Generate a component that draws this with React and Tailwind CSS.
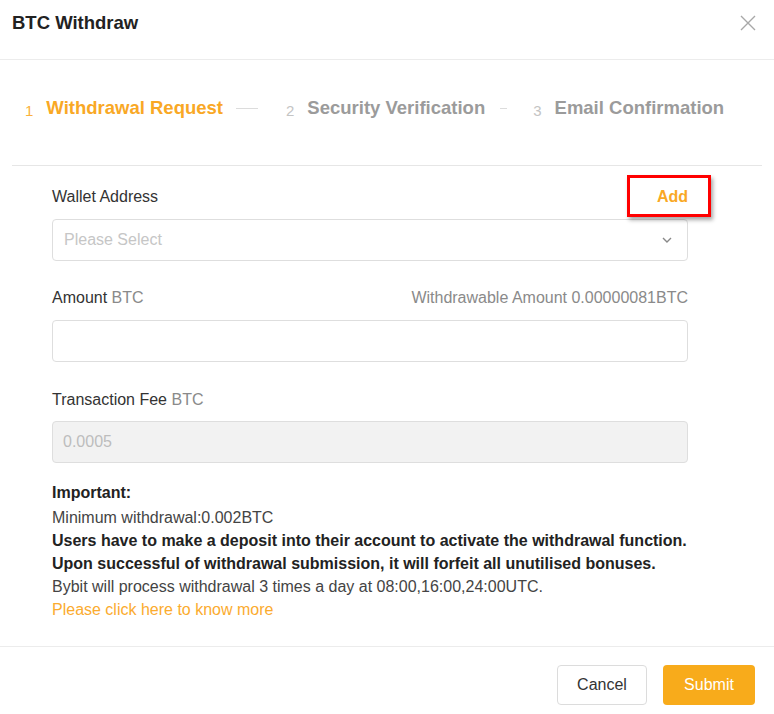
import React from 'react';

const font = { fontFamily: '"Liberation Sans", Arial, sans-serif' };

function Step({ num, label, active }) {
  return (
    <div className="flex items-baseline">
      <span className={`text-[15px] leading-none translate-y-[2px] ${active ? 'text-[#fbb13c]' : 'text-[#c4c4c4]'}`}>{num}</span>
      <span className={`ml-[13px] text-[18.5px] font-bold leading-6 ${active ? 'text-[#f9a825]' : 'text-[#9b9b9b]'}`}>{label}</span>
    </div>
  );
}

export default function App() {
  return (
    <div className="w-[774px] h-[714px] bg-white text-[#333] overflow-hidden" style={font}>
      {/* header */}
      <div className="h-[59px] flex items-center justify-between pl-3 pr-[18px] pb-[15px] pt-[15px]">
        <h2 className="text-[18.5px] font-bold text-[#222] leading-6 -translate-y-[7px]">BTC Withdraw</h2>
        <button type="button" aria-label="close" className="-translate-y-[7px]">
          <svg width="16" height="16" viewBox="0 0 16 16" className="text-[#a8a8a8]">
            <path d="M1 1L15 15M15 1L1 15" stroke="currentColor" strokeWidth="1.4" fill="none" />
          </svg>
        </button>
      </div>
      <div className="h-px bg-[#ececec]" />

      {/* steps */}
      <div className="h-[105px] flex items-center pl-[25px] pb-[9px]">
        <Step num="1" label="Withdrawal Request" active />
        <div className="ml-[13px] mr-[28px] w-[22px] h-px bg-[#dcdcdc]" />
        <Step num="2" label="Security Verification" />
        <div className="ml-[15px] mr-[26px] w-[7px] h-px bg-[#dcdcdc]" />
        <Step num="3" label="Email Confirmation" />
      </div>
      <div className="mx-3 h-px bg-[#e6e6e6]" />

      {/* form */}
      <div className="pl-[52px] pr-[86px] pt-[21px] text-[16px]">
        <div className="flex items-center justify-between h-5 mb-3">
          <span className="text-[#333]">Wallet Address</span>
          <span className="relative font-bold text-[#f9a825]">
            Add
            <span className="absolute -left-[30px] -right-[23px] -top-[10px] -bottom-[8px] border-[3px] border-[#ff0000] shadow-[2px_3px_4px_rgba(0,0,0,0.35)]" />
          </span>
        </div>
        <div className="h-[42px] border border-[#dedede] rounded flex items-center justify-between px-[11px]">
          <span className="text-[#c6c6c6]">Please Select</span>
          <svg width="12" height="8" viewBox="0 0 12 8" className="mr-[3px] text-[#888]">
            <path d="M2 2L6 6L10 2" stroke="currentColor" strokeWidth="1.4" fill="none" />
          </svg>
        </div>

        <div className="flex items-center justify-between h-5 mt-[27px] mb-3">
          <span>
            Amount <span className="text-[#8a8a8a]">BTC</span>
          </span>
          <span className="text-[#8a8a8a]">Withdrawable Amount 0.00000081BTC</span>
        </div>
        <div className="h-[42px] border border-[#dedede] rounded" />

        <div className="flex items-center h-5 mt-[28px] mb-[11px]">
          <span>
            Transaction Fee <span className="text-[#8a8a8a]">BTC</span>
          </span>
        </div>
        <div className="h-[42px] border border-[#dedede] rounded bg-[#f2f2f2] flex items-center px-[10px]">
          <span className="text-[#bdbdbd]">0.0005</span>
        </div>

        <div className="mt-[18px] leading-[23px] -mr-[20px]">
          <p className="font-bold text-[#222] mb-[2px]">Important:</p>
          <p className="text-[#444]">Minimum withdrawal:0.002BTC</p>
          <p className="font-bold text-[#222]">Users have to make a deposit into their account to activate the withdrawal function.</p>
          <p className="font-bold text-[#222]">Upon successful of withdrawal submission, it will forfeit all unutilised bonuses.</p>
          <p className="text-[#444]">Bybit will process withdrawal 3 times a day at 08:00,16:00,24:00UTC.</p>
          <p className="text-[#fbab2e]">Please click here to know more</p>
        </div>
      </div>

      {/* footer */}
      <div className="mt-[25px] h-px bg-[#ececec]" />
      <div className="flex justify-end gap-4 pt-[18px] pr-[19px]">
        <button type="button" className="w-[90px] h-[40px] rounded border border-[#dcdcdc] text-[16px] text-[#333] bg-white">
          Cancel
        </button>
        <button type="button" className="w-[92px] h-[40px] rounded bg-[#f8ab1b] text-[16px] text-white">
          Submit
        </button>
      </div>
    </div>
  );
}
